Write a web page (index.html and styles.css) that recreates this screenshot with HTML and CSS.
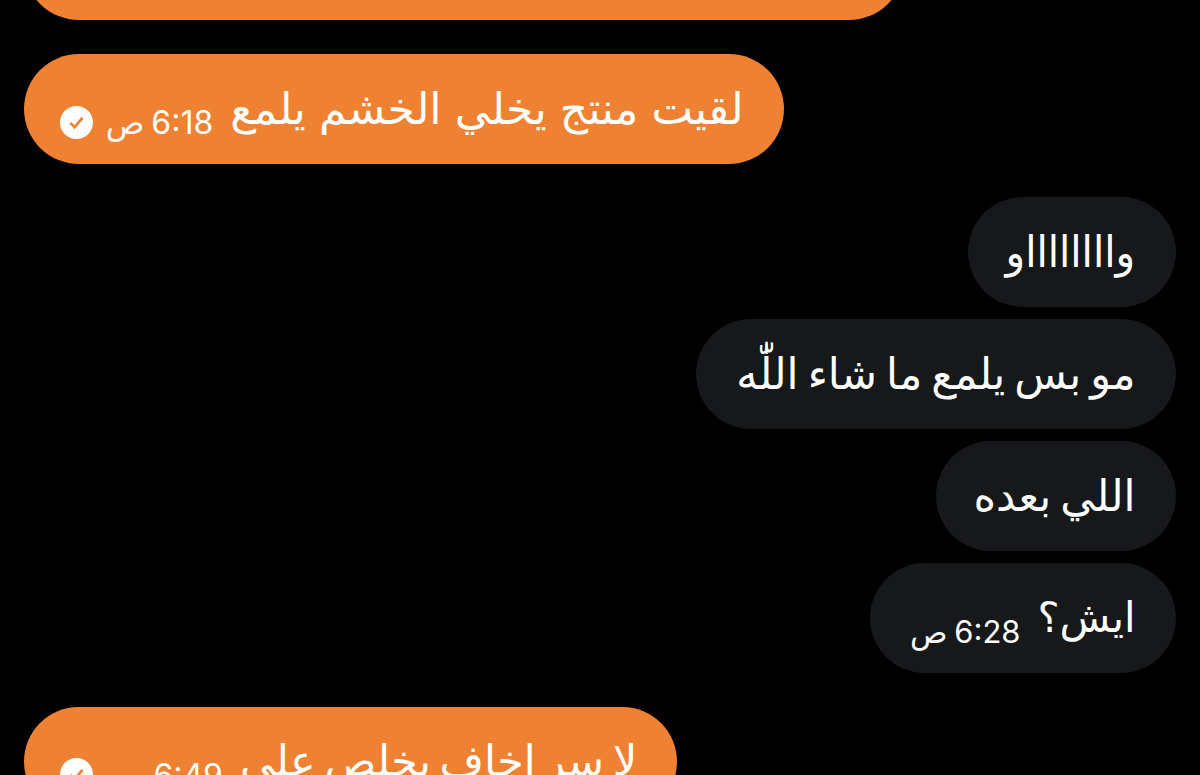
FILE: index.html
```html
<!DOCTYPE html>
<html lang="ar" dir="rtl">
<head>
    <meta charset="UTF-8">
    <meta name="viewport" content="width=device-width, initial-scale=1.0">
    <title>Chat</title>
    <link rel="stylesheet" href="styles.css">
</head>
<body>
    <div class="chat">
        <div class="bubble sent previous"></div>

        <div class="bubble sent first">
            <span class="text">لقيت منتج يخلي الخشم يلمع</span>
            <span class="time">6:18 ص</span>
            <svg class="check" viewBox="0 0 34 34">
                <circle cx="17" cy="17" r="17" fill="#fff"/>
                <path d="M10.6 17.4l4.4 4.4 8.2-9.6" fill="none" stroke="#ee8132" stroke-width="2.8"/>
            </svg>
        </div>

        <div class="bubble received wow"><span class="text">وااااااااو</span></div>
        <div class="bubble received mashallah"><span class="text">مو بس يلمع ما شاء اللّٰه</span></div>
        <div class="bubble received next"><span class="text">اللي بعده</span></div>
        <div class="bubble received what">
            <span class="text">ايش؟</span>
            <span class="time">6:28 ص</span>
        </div>

        <div class="bubble sent last">
            <span class="text">لا سر اخاف يخلص علي</span>
            <span class="time">6:49 ص</span>
            <svg class="check" viewBox="0 0 34 34">
                <circle cx="17" cy="17" r="17" fill="#fff"/>
                <path d="M10.6 17.4l4.4 4.4 8.2-9.6" fill="none" stroke="#ee8132" stroke-width="2.8"/>
            </svg>
        </div>
    </div>
</body>
</html>
```
FILE: styles.css
```css
* {
    margin: 0;
    padding: 0;
    box-sizing: border-box;
}

body {
    background: #000;
    color: #fff;
    font-family: Inter, "DejaVu Sans", sans-serif;
    height: 100vh;
    overflow: hidden;
}

.chat {
    display: flex;
    flex-direction: column;
    align-items: flex-start;
    height: 100vh;
    padding: 0 24.5px 0 24.2px;
    overflow: hidden;
}

.bubble {
    display: flex;
    align-items: center;
    flex-shrink: 0;
    height: 109.8px;
    padding: 0 40px 0 36px;
    border-radius: 55px;
    margin-bottom: 12px;
    white-space: nowrap;
}

.sent {
    align-self: flex-end;
    background: #ee8132;
    margin-bottom: 33.8px;
}

.received {
    background: #16181a;
}

.text {
    font-size: 43px;
    line-height: 60px;
    margin-bottom: 2px;
}

.time {
    font-size: 32px;
    line-height: 40px;
    word-spacing: -2px;
    margin-right: 17px;
    margin-top: 29px;
}

.check {
    flex-shrink: 0;
    width: 33px;
    height: 33px;
    margin-right: auto;
    margin-top: 27px;
}

.previous {
    width: 880px;
    margin-top: -89.8px;
}

.first {
    width: 759.5px;
}

.first .text {
    font-size: 44px;
    word-spacing: 0.8px;
}

.wow {
    width: 207.5px;
}

/* keep the long alifs tall but close together */
.wow .text {
    transform: scaleX(0.945);
    transform-origin: right;
}

.mashallah {
    width: 480px;
}

.mashallah .text {
    word-spacing: -3px;
}

.next {
    width: 240px;
}

.next .text {
    word-spacing: -3px;
}

.what {
    width: 306px;
    margin-bottom: 34px;
}

.what .text {
    font-size: 41.5px;
}

.what .time {
    font-size: 31px;
}

.last {
    width: 653px;
}

.last .text {
    word-spacing: -3.5px;
}
```
